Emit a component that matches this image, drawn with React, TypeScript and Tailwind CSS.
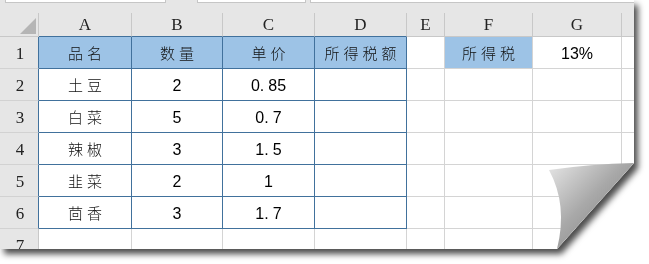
import React from 'react';

const COLS = ['A', 'B', 'C', 'D', 'E', 'F', 'G', ''];

const rows: string[][] = [
  ['品名', '数量', '单价', '所得税额', '', '所得税', '13%', ''],
  ['土豆', '2', '0.85', '', '', '', '', ''],
  ['白菜', '5', '0.7', '', '', '', '', ''],
  ['辣椒', '3', '1.5', '', '', '', '', ''],
  ['韭菜', '2', '1', '', '', '', '', ''],
  ['茴香', '3', '1.7', '', '', '', '', ''],
  ['', '', '', '', '', '', '', ''],
];

const isCjk = (s: string) => /[\u4e00-\u9fff]/.test(s);

// numbers in the sheet render the period with a wide gap
const NumText = ({ value }: { value: string }) => {
  const [a, b] = value.split('.');
  if (b === undefined) return <>{value}</>;
  return (
    <>
      {a}.<span className="ml-[4px]">{b}</span>
    </>
  );
};

const Cell = ({ value, row, col }: { value: string; row: number; col: number }) => {
  const inTable = row < 6 && col < 4;
  const headerFill = (row === 0 && col < 4) || (row === 0 && col === 5);
  return (
    <div
      className={`h-[32px] flex items-center justify-center pt-[2px] border-r border-b ${
        inTable ? 'border-[#41719c]' : 'border-[#d4d4d4]'
      } ${col === 7 ? 'border-r-0' : ''} ${headerFill ? 'bg-[#9dc3e6]' : 'bg-white'}`}
    >
      {value &&
        (isCjk(value) ? (
          <span className="font-['Noto_Sans_CJK_SC',sans-serif] font-light text-[15px] tracking-[4px] pl-[4px] text-[#111]">
            {value}
          </span>
        ) : (
          <span className="font-['Liberation_Sans',sans-serif] text-[16px] text-black">
            <NumText value={value} />
          </span>
        ))}
    </div>
  );
};

export default function App() {
  return (
    <div className="w-[649px] h-[264px] bg-white overflow-hidden">
      <div className="relative w-[634px] drop-shadow-[4px_5px_3px_rgba(0,0,0,0.7)]">
        <div className="h-[249px] overflow-hidden bg-[#e6e6e6] [clip-path:polygon(0_0,100%_0,100%_163px,557px_100%,0_100%)]">
          {/* formula bar remnants */}
          <div className="h-[3px] flex">
            <div className="ml-[5px] w-[161px] bg-white border-x border-b border-[#c6c6c6]" />
            <div className="ml-[31px] w-[109px] bg-white border-x border-b border-[#c6c6c6]" />
            <div className="ml-[4px] flex-1 bg-white border-l border-b border-[#c6c6c6]" />
          </div>
          <div className="h-[10px]" />

          <div className="grid grid-cols-[39px_93px_91px_92px_92px_38px_88px_89px_12px]">
            {/* column headers */}
            <div className="h-[24px] relative border-r border-b border-[#c8c8c8]">
              <svg className="absolute left-[20px] top-[5px]" width="16" height="16" viewBox="0 0 16 16">
                <polygon points="0,16 16,16 16,0" fill="#b5b5b5" />
              </svg>
            </div>
            {COLS.map((c, i) => (
              <div
                key={i}
                className={`h-[24px] flex items-center justify-center border-b ${
                  i < 4 ? 'border-[#41719c]' : 'border-[#c8c8c8]'
                } ${i === 7 ? '' : 'border-r border-r-[#c8c8c8]'} font-['Liberation_Serif',serif] text-[17px] text-[#222]`}
              >
                {c}
              </div>
            ))}

            {rows.map((r, ri) => (
              <React.Fragment key={ri}>
                <div
                  className={`h-[32px] flex items-center justify-center pt-[3px] pl-[2px] border-b border-b-[#d2d2d2] border-r ${
                    ri < 6 ? 'border-r-[#41719c]' : 'border-r-[#c8c8c8]'
                  } font-['Liberation_Serif',serif] text-[17px] text-[#222]`}
                >
                  {ri + 1}
                </div>
                {r.map((v, ci) => (
                  <Cell key={ci} value={v} row={ri} col={ci} />
                ))}
              </React.Fragment>
            ))}
          </div>
        </div>

        {/* page curl */}
        <svg className="absolute left-0 top-0 pointer-events-none" width="640" height="255" viewBox="0 0 640 255">
          <defs>
            <linearGradient id="curl" x1="0" y1="0" x2="1" y2="1">
              <stop offset="0" stopColor="#e6e6e6" />
              <stop offset="0.45" stopColor="#a8a8a8" />
              <stop offset="1" stopColor="#777777" />
            </linearGradient>
          </defs>
          <path d="M634 163 Q590 164 549 170 Q568 205 557 249 Z" fill="url(#curl)" />
        </svg>
      </div>
    </div>
  );
}
